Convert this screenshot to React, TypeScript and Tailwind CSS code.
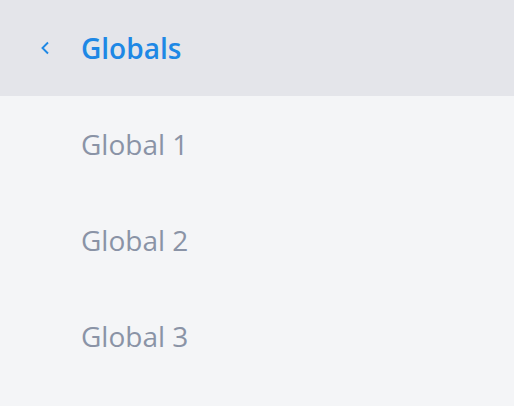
export default function App() {
  const items = ['Global 1', 'Global 2', 'Global 3'];
  return (
    <div className="min-h-[406px] w-full bg-[#f4f5f7] font-['Open_Sans',sans-serif]">
      <div className="flex h-24 items-center bg-[#e4e5ea]">
        <div className="flex w-[81px] pl-[40px]">
          <svg width="10" height="14" viewBox="0 0 10 14" fill="none" stroke="#1e88e5" strokeWidth="1.9">
            <path d="M8 1.5 L2.5 7 L8 12.5" />
          </svg>
        </div>
        <span className="text-[28px] font-semibold text-[#1e88e5]">Globals</span>
      </div>
      {items.map((item) => (
        <div key={item} className="flex h-24 items-center pl-[81px]">
          <span className="text-[28px] text-[#8a93a6]">{item}</span>
        </div>
      ))}
    </div>
  );
}
